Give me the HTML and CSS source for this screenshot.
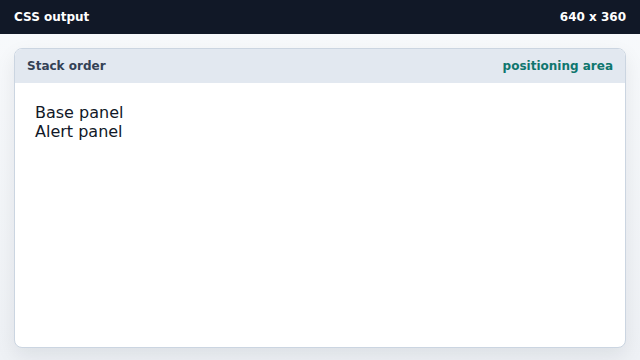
FILE: index.html
```html
<!DOCTYPE html>
<html>
<head>
<meta charset="utf-8">
<link rel="stylesheet" href="styles.css">
</head>
<body>
<div class="topbar">
  <span class="title">CSS output</span>
  <span class="size">640 x 360</span>
</div>
<main class="stage">
  <section class="panel">
    <header class="panel-head">
      <span class="panel-title">Stack order</span>
      <span class="panel-tag">positioning area</span>
    </header>
    <div class="panel-body">
      <div class="item">Base panel</div>
      <div class="item">Alert panel</div>
    </div>
  </section>
</main>
</body>
</html>
```
FILE: styles.css
```css
html, body {
  margin: 0;
  height: 100%;
}
body {
  font-family: "DejaVu Sans", sans-serif;
  background: linear-gradient(180deg, #f8fafc 0%, #eef1f5 100%);
  display: flex;
  flex-direction: column;
  overflow: hidden;
}
.topbar {
  height: 34px;
  flex: none;
  background: #111827;
  color: #ffffff;
  display: flex;
  align-items: center;
  justify-content: space-between;
  padding: 0 14px;
  font-size: 12px;
  font-weight: bold;
}
.stage {
  flex: 1;
  display: flex;
  padding: 14px 14px 12px;
  min-height: 0;
}
.panel {
  flex: 1;
  background: #ffffff;
  border: 1px solid #cbd5e1;
  border-radius: 8px;
  box-shadow: 0 8px 20px rgba(15, 23, 42, 0.08);
  overflow: hidden;
  display: flex;
  flex-direction: column;
}
.panel-head {
  height: 34px;
  flex: none;
  background: #e2e8f0;
  display: flex;
  align-items: center;
  justify-content: space-between;
  padding: 0 12px;
  font-size: 12px;
  font-weight: bold;
}
.panel-title {
  color: #334155;
}
.panel-tag {
  color: #0f766e;
}
.panel-body {
  padding: 20px 20px;
  font-size: 16px;
  color: #111827;
}
```
